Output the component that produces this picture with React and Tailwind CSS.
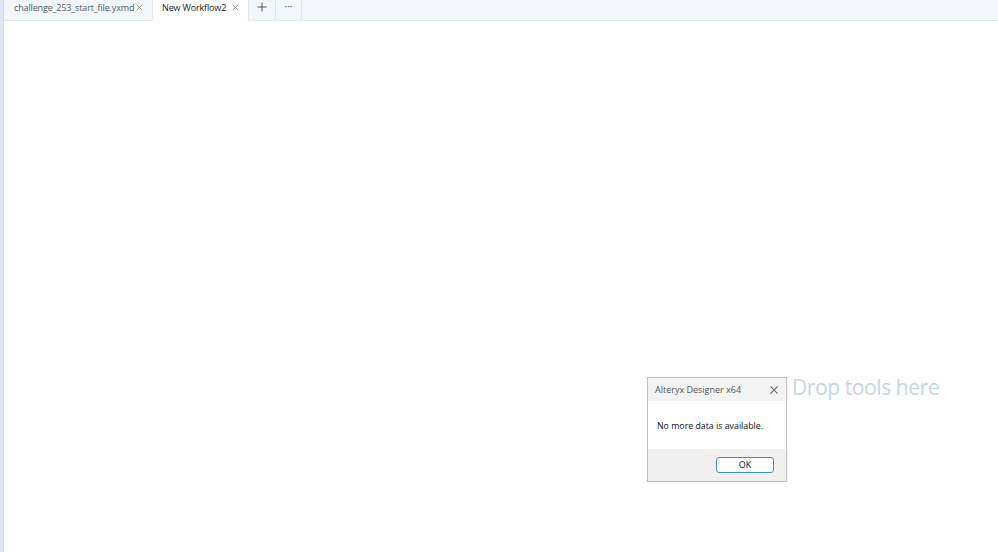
const tabs = [
  { name: "challenge_253_start_file.yxmd", active: false, width: "w-[149px]" },
  { name: "New Workflow2", active: true, width: "w-[96px]" },
];

const CloseIcon = ({ className }) => (
  <svg viewBox="0 0 10 10" className={className} fill="none" stroke="currentColor" strokeWidth="0.9">
    <path d="M2 2 L8 8 M8 2 L2 8" />
  </svg>
);

export default function App() {
  return (
    <div
      className="w-[998px] h-[552px] flex bg-white overflow-hidden"
      style={{ fontFamily: "'Segoe UI', 'Open Sans', 'Liberation Sans', sans-serif" }}
    >
      <div className="w-[4px] bg-[#dfe5f3] border-r border-[#cfd8ec]" />
      <div className="flex-1 flex flex-col">
        <div className="h-[21px] flex bg-[#f3f6fb] border-b border-[#e3e8f2]">
          {tabs.map((t) => (
            <div
              key={t.name}
              className={
                (t.active
                  ? "bg-white text-[#222] h-[21px] pl-[9px] "
                  : "text-[#555a66] pl-[10px] ") +
                t.width +
                " flex items-center justify-between pr-[8px] pb-[6px] border-r border-[#e1e6f0]"
              }
            >
              <span className="text-[9px] tracking-[-0.15px] leading-none">{t.name}</span>
              <CloseIcon className="w-[9px] h-[9px] text-[#888]" />
            </div>
          ))}
          <div className="w-[27px] flex items-center justify-center pb-[6px] border-r border-[#e1e6f0] text-[#555]">
            <svg viewBox="0 0 10 10" className="w-[10px] h-[10px]" stroke="currentColor" strokeWidth="1">
              <path d="M5 0.5 V9.5 M0.5 5 H9.5" />
            </svg>
          </div>
          <div className="w-[26px] flex items-center justify-center border-r border-[#e1e6f0] text-[#555] text-[10px] leading-none pb-[9px]">
            ···
          </div>
        </div>
        <div className="flex-1 pl-[643px] pt-[356px]">
          <div className="flex items-start gap-[5px]">
            <div className="w-[140px] border border-[#bfbfbf] bg-white shadow-[0_0_2px_rgba(0,0,0,0.08)]">
              <div className="h-[23px] flex items-center justify-between pl-[7px] pr-[6px] bg-[#f3f3f3]">
                <span className="text-[9px] text-[#555]">Alteryx Designer x64</span>
                <CloseIcon className="w-[12px] h-[12px] text-[#666]" />
              </div>
              <div className="h-[48px] flex items-center pl-[9px] pt-[3px] text-[8.8px] text-[#111]">
                No more data is available.
              </div>
              <div className="h-[32px] bg-[#f0f0f0] flex items-center justify-end pr-[12px]">
                <div className="w-[58px] h-[16px] border border-[#3c8fdc] rounded-[3px] bg-[#fdfdfd] flex items-center justify-center text-[9px] text-[#111]">
                  OK
                </div>
              </div>
            </div>
            <span className="text-[21px] tracking-[-0.4px] leading-none text-[#c7d4ea]">Drop tools here</span>
          </div>
        </div>
      </div>
    </div>
  );
}
